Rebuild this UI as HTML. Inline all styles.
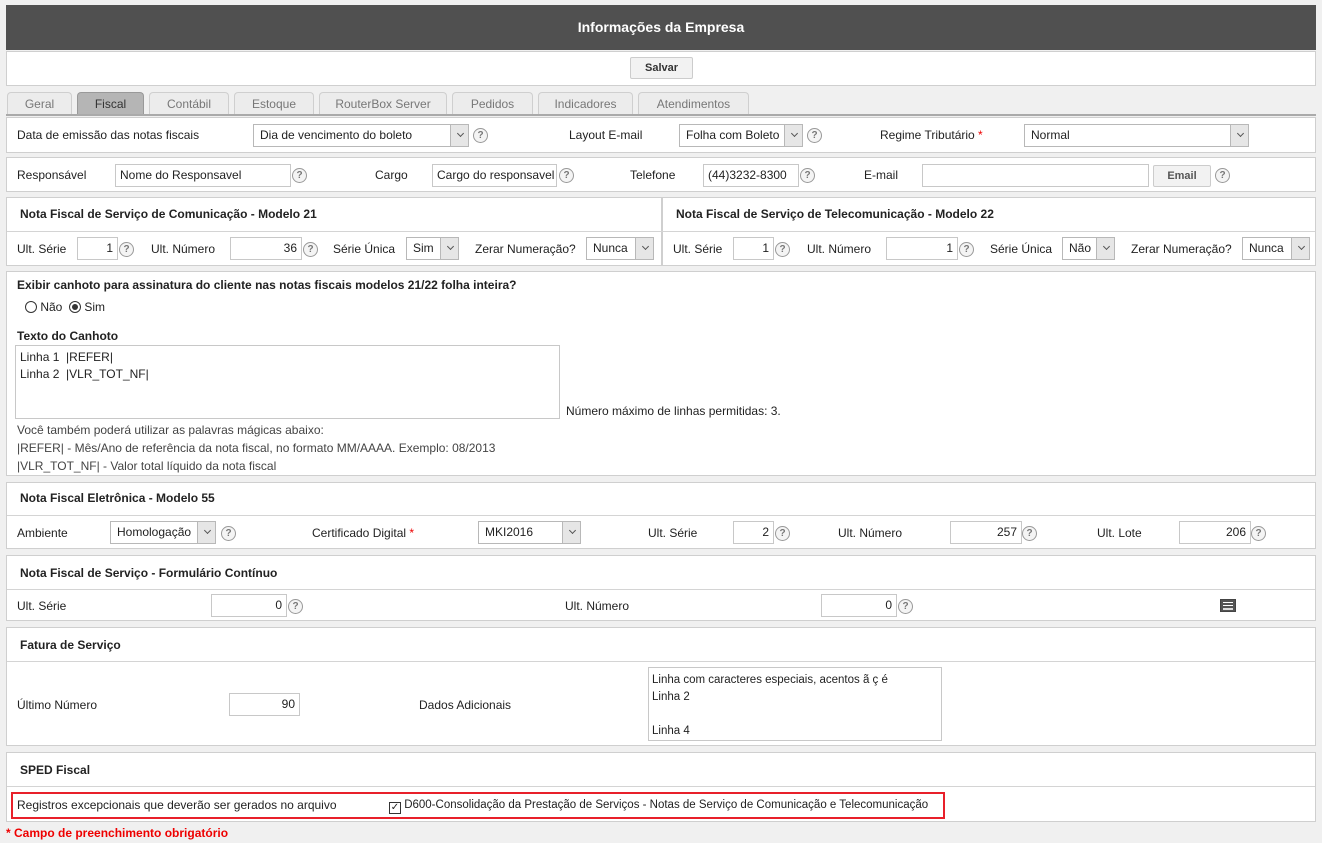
<!DOCTYPE html>
<html><head><meta charset="utf-8"><style>
*{box-sizing:border-box;margin:0;padding:0}
body{width:1322px;height:843px;background:#f0f0f0;font-family:"Liberation Sans",sans-serif;font-size:12px;color:#222;position:relative;overflow:hidden}
.a{position:absolute;white-space:nowrap;line-height:15px}
.p{position:absolute;background:#fff;border:1px solid #cfcfcf}
.hl{position:absolute;height:1px;background:#d4d4d4}
.b{font-weight:bold}
.in{position:absolute;background:#fff;border:1px solid #c8c8c8;height:23px;line-height:21px;padding:0 4px;white-space:nowrap;overflow:hidden}
.r{text-align:right}
.sel{position:absolute;background:#fff;border:1px solid #b8b8b8;height:23px;line-height:21px;padding:0 6px;white-space:nowrap}
.sel:after{content:"";position:absolute;right:0;top:0;width:17px;height:21px;background:#e6e6e6;border-left:1px solid #b8b8b8}
.sel i{position:absolute;right:5px;top:6px;width:5px;height:5px;border-right:1px solid #555;border-bottom:1px solid #555;transform:rotate(45deg);z-index:2}
.q{position:absolute;width:15px;height:15px;border-radius:50%;border:1px solid #999;background:#f4f4f4;color:#777;font-size:10px;line-height:13px;text-align:center;font-weight:bold}
.tab{position:absolute;top:92px;height:22px;background:#ececec;border:1px solid #cfcfcf;border-bottom:none;border-radius:4px 4px 0 0;text-align:center;line-height:22px;color:#777;font-size:12px}
.st{color:#e00}
</style></head><body>
<div class="a" style="left:6px;top:5px;width:1310px;height:45px;background:#505050;color:#fff;font-weight:bold;font-size:14px;text-align:center;line-height:45px">Informações da Empresa</div>
<div class="p" style="left:6px;top:51px;width:1310px;height:35px"></div>
<div class="a" style="left:630px;top:57px;width:63px;height:22px;border:1px solid #ccc;background:#f2f2f2;border-radius:2px;text-align:center;line-height:20px;font-weight:bold;font-size:11px;color:#333">Salvar</div>

<div class="tab" style="left:7px;width:65px">Geral</div>
<div class="tab" style="left:77px;width:67px;background:#b5b5b5;border-color:#999;color:#333">Fiscal</div>
<div class="tab" style="left:149px;width:80px">Contábil</div>
<div class="tab" style="left:234px;width:80px">Estoque</div>
<div class="tab" style="left:319px;width:128px">RouterBox Server</div>
<div class="tab" style="left:452px;width:81px">Pedidos</div>
<div class="tab" style="left:538px;width:95px">Indicadores</div>
<div class="tab" style="left:638px;width:111px">Atendimentos</div>
<div class="a" style="left:6px;top:114px;width:1310px;height:2px;background:#aaa"></div>

<div class="p" style="left:6px;top:117px;width:1310px;height:36px"></div>
<div class="a" style="left:17px;top:128px">Data de emissão das notas fiscais</div>
<div class="sel" style="left:253px;top:124px;width:216px">Dia de vencimento do boleto<i></i></div>
<div class="q" style="left:473px;top:128px">?</div>
<div class="a" style="left:569px;top:128px">Layout E-mail</div>
<div class="sel" style="left:679px;top:124px;width:124px">Folha com Boleto<i></i></div>
<div class="q" style="left:807px;top:128px">?</div>
<div class="a" style="left:880px;top:128px">Regime Tributário <span class="st">*</span></div>
<div class="sel" style="left:1024px;top:124px;width:225px">Normal<i></i></div>

<div class="p" style="left:6px;top:157px;width:1310px;height:35px"></div>
<div class="a" style="left:17px;top:168px">Responsável</div>
<div class="in" style="left:115px;top:164px;width:176px">Nome do Responsavel</div>
<div class="q" style="left:292px;top:168px">?</div>
<div class="a" style="left:375px;top:168px">Cargo</div>
<div class="in" style="left:432px;top:164px;width:125px">Cargo do responsavel</div>
<div class="q" style="left:559px;top:168px">?</div>
<div class="a" style="left:630px;top:168px">Telefone</div>
<div class="in" style="left:703px;top:164px;width:96px">(44)3232-8300</div>
<div class="q" style="left:800px;top:168px">?</div>
<div class="a" style="left:864px;top:168px">E-mail</div>
<div class="in" style="left:922px;top:164px;width:227px"></div>
<div class="a" style="left:1153px;top:165px;width:58px;height:22px;border:1px solid #ccc;background:#f2f2f2;border-radius:2px;text-align:center;line-height:20px;font-weight:bold;font-size:11px;color:#555">Email</div>
<div class="q" style="left:1215px;top:168px">?</div>

<div class="p" style="left:6px;top:197px;width:656px;height:69px"></div>
<div class="p" style="left:662px;top:197px;width:654px;height:69px"></div>
<div class="hl" style="left:7px;top:231px;width:1308px"></div>
<div class="a b" style="left:20px;top:207px">Nota Fiscal de Serviço de Comunicação - Modelo 21</div>
<div class="a b" style="left:676px;top:207px">Nota Fiscal de Serviço de Telecomunicação - Modelo 22</div>
<div class="a" style="left:17px;top:242px">Ult. Série</div>
<div class="in r" style="left:77px;top:237px;width:41px">1</div><div class="q" style="left:119px;top:242px">?</div>
<div class="a" style="left:151px;top:242px">Ult. Número</div>
<div class="in r" style="left:230px;top:237px;width:72px">36</div><div class="q" style="left:303px;top:242px">?</div>
<div class="a" style="left:333px;top:242px">Série Única</div>
<div class="sel" style="left:406px;top:237px;width:53px">Sim<i></i></div>
<div class="a" style="left:475px;top:242px">Zerar Numeração?</div>
<div class="sel" style="left:586px;top:237px;width:68px">Nunca<i></i></div>
<div class="a" style="left:673px;top:242px">Ult. Série</div>
<div class="in r" style="left:733px;top:237px;width:41px">1</div><div class="q" style="left:775px;top:242px">?</div>
<div class="a" style="left:807px;top:242px">Ult. Número</div>
<div class="in r" style="left:886px;top:237px;width:72px">1</div><div class="q" style="left:959px;top:242px">?</div>
<div class="a" style="left:990px;top:242px">Série Única</div>
<div class="sel" style="left:1062px;top:237px;width:53px">Não<i></i></div>
<div class="a" style="left:1131px;top:242px">Zerar Numeração?</div>
<div class="sel" style="left:1242px;top:237px;width:68px">Nunca<i></i></div>

<div class="p" style="left:6px;top:271px;width:1310px;height:205px"></div>
<div class="a b" style="left:17px;top:278px">Exibir canhoto para assinatura do cliente nas notas fiscais modelos 21/22 folha inteira?</div>
<div class="a" style="left:25px;top:300px"><span style="display:inline-block;width:12px;height:12px;border:1px solid #333;border-radius:50%;vertical-align:-2px"></span> Não &nbsp;<span style="display:inline-block;width:12px;height:12px;border:1px solid #333;border-radius:50%;vertical-align:-2px;position:relative"><span style="position:absolute;left:2px;top:2px;width:6px;height:6px;border-radius:50%;background:#333"></span></span> Sim</div>
<div class="a b" style="left:17px;top:329px">Texto do Canhoto</div>
<div class="a" style="left:15px;top:345px;width:545px;height:74px;border:1px solid #c8c8c8;padding:3px 4px;line-height:17px;white-space:pre">Linha 1  |REFER|
Linha 2  |VLR_TOT_NF|</div>
<div class="a" style="left:566px;top:404px">Número máximo de linhas permitidas: 3.</div>
<div class="a" style="left:17px;top:421px;line-height:18px;color:#444">Você também poderá utilizar as palavras mágicas abaixo:<br>|REFER| - Mês/Ano de referência da nota fiscal, no formato MM/AAAA. Exemplo: 08/2013<br>|VLR_TOT_NF| - Valor total líquido da nota fiscal</div>

<div class="p" style="left:6px;top:482px;width:1310px;height:67px"></div>
<div class="hl" style="left:7px;top:515px;width:1308px"></div>
<div class="a b" style="left:20px;top:491px">Nota Fiscal Eletrônica - Modelo 55</div>
<div class="a" style="left:17px;top:526px">Ambiente</div>
<div class="sel" style="left:110px;top:521px;width:106px">Homologação<i></i></div><div class="q" style="left:221px;top:526px">?</div>
<div class="a" style="left:312px;top:526px">Certificado Digital <span class="st">*</span></div>
<div class="sel" style="left:478px;top:521px;width:103px">MKI2016<i></i></div>
<div class="a" style="left:648px;top:526px">Ult. Série</div>
<div class="in r" style="left:733px;top:521px;width:41px">2</div><div class="q" style="left:775px;top:526px">?</div>
<div class="a" style="left:838px;top:526px">Ult. Número</div>
<div class="in r" style="left:950px;top:521px;width:72px">257</div><div class="q" style="left:1022px;top:526px">?</div>
<div class="a" style="left:1097px;top:526px">Ult. Lote</div>
<div class="in r" style="left:1179px;top:521px;width:72px">206</div><div class="q" style="left:1251px;top:526px">?</div>

<div class="p" style="left:6px;top:555px;width:1310px;height:66px"></div>
<div class="hl" style="left:7px;top:589px;width:1308px"></div>
<div class="a b" style="left:20px;top:566px">Nota Fiscal de Serviço - Formulário Contínuo</div>
<div class="a" style="left:17px;top:599px">Ult. Série</div>
<div class="in r" style="left:211px;top:594px;width:76px">0</div><div class="q" style="left:288px;top:599px">?</div>
<div class="a" style="left:565px;top:599px">Ult. Número</div>
<div class="in r" style="left:821px;top:594px;width:76px">0</div><div class="q" style="left:898px;top:599px">?</div>
<div class="a" style="left:1220px;top:599px;width:16px;height:13px;background:#555;border:1px solid #444"><div style="margin:2px 2px;height:1px;background:#fff"></div><div style="margin:2px 2px;height:1px;background:#fff"></div><div style="margin:2px 2px;height:2px;background:#ddd"></div></div>

<div class="p" style="left:6px;top:627px;width:1310px;height:119px"></div>
<div class="hl" style="left:7px;top:661px;width:1308px"></div>
<div class="a b" style="left:20px;top:638px">Fatura de Serviço</div>
<div class="a" style="left:17px;top:698px">Último Número</div>
<div class="in r" style="left:229px;top:693px;width:71px">90</div>
<div class="a" style="left:419px;top:698px">Dados Adicionais</div>
<div class="a" style="left:648px;top:667px;width:294px;height:74px;border:1px solid #c8c8c8;padding:4px 3px;line-height:17px;white-space:pre;font-size:11.5px">Linha com caracteres especiais, acentos ã ç é
Linha 2

Linha 4</div>

<div class="p" style="left:6px;top:752px;width:1310px;height:70px"></div>
<div class="hl" style="left:7px;top:786px;width:1308px"></div>
<div class="a b" style="left:20px;top:763px">SPED Fiscal</div>
<div class="a" style="left:11px;top:792px;width:934px;height:27px;border:2px solid #e8202a"></div>
<div class="a" style="left:17px;top:798px">Registros excepcionais que deverão ser gerados no arquivo</div>
<div class="a" style="left:389px;top:798px;font-size:11.5px"><span style="display:inline-block;width:12px;height:12px;border:1px solid #333;vertical-align:-2px;font-size:10px;line-height:10px;text-align:center">✓</span> D600-Consolidação da Prestação de Serviços - Notas de Serviço de Comunicação e Telecomunicação</div>
<div class="a b" style="left:6px;top:826px;color:#e00;font-size:12px">* Campo de preenchimento obrigatório</div>
</body></html>
